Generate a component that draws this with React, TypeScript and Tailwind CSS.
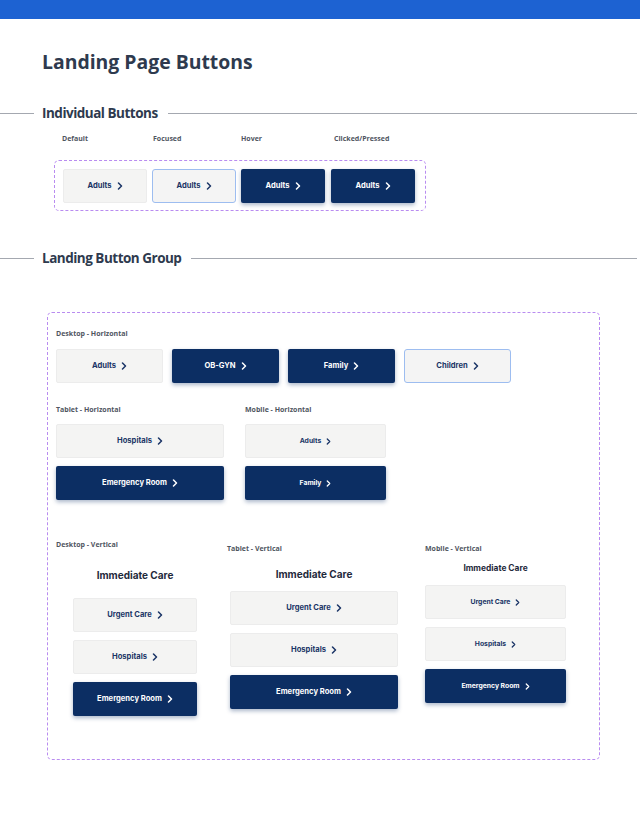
import React from "react";

type Variant = "light" | "focus" | "dark";

const Chevron = ({ size = 6 }: { size?: number }) => (
  <svg width={size} height={size + 2} viewBox="0 0 6 8" fill="none" className="shrink-0">
    <path d="M1.5 1 L4.5 4 L1.5 7" stroke="currentColor" strokeWidth="1.5" strokeLinecap="round" strokeLinejoin="round" />
  </svg>
);

function Btn({
  label,
  variant = "light",
  className = "",
  small = false,
}: {
  label: string;
  variant?: Variant;
  className?: string;
  small?: boolean;
}) {
  const look =
    variant === "dark"
      ? "bg-[#0c2e63] text-white shadow-[0_2px_4px_rgba(12,46,99,0.35)]"
      : variant === "focus"
        ? "bg-[#f4f4f4] text-[#1a3466] border border-[#9dbdf0] rounded-[3px]"
        : "bg-[#f4f4f3] text-[#1a3466] border border-[#ececec]";
  return (
    <div
      className={`flex items-center justify-center gap-[5px] h-[34px] rounded-[2px] font-bold ${small ? "text-[6.8px]" : "text-[7.6px]"} ${look} ${className}`}
      style={{ fontFamily: "Inter, 'Noto Sans', sans-serif" }}
    >
      <span>{label}</span>
      <Chevron size={small ? 5 : 6} />
    </div>
  );
}

function SectionHeading({ title }: { title: string }) {
  return (
    <div className="flex items-center h-[20px]">
      <div className="w-[34px] h-px bg-[#a4a8b0]" />
      <h2 className="pl-[8px] pr-[10px] text-[13.5px] tracking-[-0.5px] font-bold text-[#2e3a4e] leading-[20px]">{title}</h2>
      <div className="flex-1 h-px bg-[#a4a8b0] mr-[3px]" />
    </div>
  );
}

const Label = ({ text, className = "" }: { text: string; className?: string }) => (
  <div className={`text-[7px] leading-[10px] font-bold text-[#50565f] whitespace-nowrap ${className}`}>{text}</div>
);

const CareTitle = ({ className = "" }: { className?: string }) => (
  <div
    className={`text-center font-bold text-[#1f2a3c] ${className}`}
    style={{ fontFamily: "Inter, 'Noto Sans', sans-serif" }}
  >
    Immediate Care
  </div>
);

export default function App() {
  return (
    <div className="w-[640px] min-h-[831px] bg-white" style={{ fontFamily: "'Open Sans', 'Noto Sans', sans-serif" }}>
      <div className="h-[19px] bg-[#1d62d2]" />

      <h1 className="mt-[29px] pl-[42px] text-[19.4px] leading-[28px] font-bold text-[#2e3a4e]">Landing Page Buttons</h1>

      <div className="mt-[27px]">
        <SectionHeading title="Individual Buttons" />
      </div>

      {/* individual states */}
      <div className="mt-[11px] flex pl-[62px]">
        <Label text="Default" className="w-[91px]" />
        <Label text="Focused" className="w-[88px]" />
        <Label text="Hover" className="w-[93px]" />
        <Label text="Clicked/Pressed" />
      </div>
      <div className="mt-[16px] ml-[54px] w-[372px] h-[51px] border border-dashed border-[#b98cf0] rounded-[5px] flex items-center pl-[8px] gap-[5px]">
        <Btn label="Adults" className="w-[84px]" />
        <Btn label="Adults" variant="focus" className="w-[84px]" />
        <Btn label="Adults" variant="dark" className="w-[84px]" />
        <Btn label="Adults" variant="dark" className="w-[84px] ml-[1px]" />
      </div>

      <div className="mt-[37px]">
        <SectionHeading title="Landing Button Group" />
      </div>

      {/* button groups */}
      <div className="mt-[44px] ml-[47px] w-[553px] h-[448px] border border-dashed border-[#b98cf0] rounded-[5px] pl-[8px] pt-[16px]">
        <Label text="Desktop - Horizontal" />
        <div className="mt-[10px] flex gap-[9px]">
          <Btn label="Adults" className="w-[107px]" />
          <Btn label="OB-GYN" variant="dark" className="w-[107px]" />
          <Btn label="Family" variant="dark" className="w-[107px]" />
          <Btn label="Children" variant="focus" className="w-[107px]" />
        </div>

        <div className="mt-[22px] flex gap-[21px]">
          <div className="w-[168px]">
            <Label text="Tablet - Horizontal" />
            <div className="mt-[9px] flex flex-col gap-[8px]">
              <Btn label="Hospitals" />
              <Btn label="Emergency Room" variant="dark" />
            </div>
          </div>
          <div className="w-[141px]">
            <Label text="Mobile -  Horizontal" />
            <div className="mt-[9px] flex flex-col gap-[8px]">
              <Btn label="Adults" small />
              <Btn label="Family" variant="dark" small />
            </div>
          </div>
        </div>

        <div className="mt-[40px] flex items-start">
          <div className="w-[158px]">
            <Label text="Desktop - Vertical" />
            <CareTitle className="mt-[18px] text-[10px] leading-[14px]" />
            <div className="mt-[16px] mx-auto w-[124px] flex flex-col gap-[8px]">
              <Btn label="Urgent Care" />
              <Btn label="Hospitals" />
              <Btn label="Emergency Room" variant="dark" />
            </div>
          </div>
          <div className="ml-[13px] mt-[4px] w-[171px]">
            <Label text="Tablet - Vertical" />
            <CareTitle className="mt-[13px] pl-[3px] text-[10px] leading-[14px]" />
            <div className="mt-[10px] ml-[3px] w-[168px] flex flex-col gap-[8px]">
              <Btn label="Urgent Care" />
              <Btn label="Hospitals" />
              <Btn label="Emergency Room" variant="dark" />
            </div>
          </div>
          <div className="ml-[27px] mt-[4px] w-[141px]">
            <Label text="Mobile - Vertical" />
            <CareTitle className="mt-[8px] text-[8.4px] leading-[12px]" />
            <div className="mt-[11px] flex flex-col gap-[8px]">
              <Btn label="Urgent Care" small />
              <Btn label="Hospitals" small />
              <Btn label="Emergency Room" variant="dark" small />
            </div>
          </div>
        </div>
      </div>
    </div>
  );
}
